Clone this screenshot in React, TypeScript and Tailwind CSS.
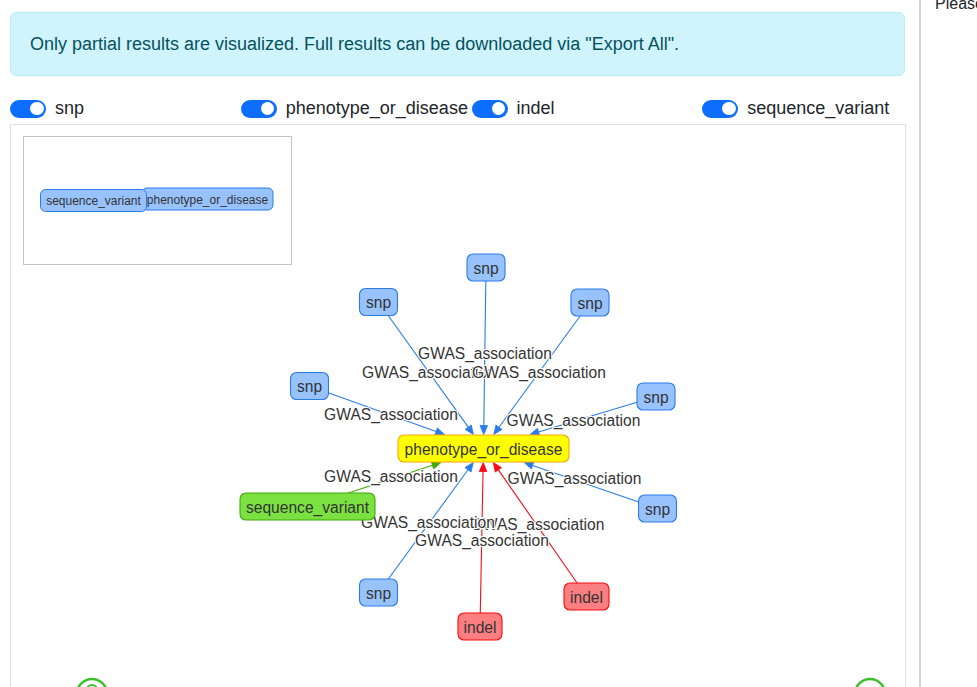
import React from 'react';

type GraphNode = {
  id: string;
  label: string;
  x: number;
  y: number;
  w: number;
  fill: string;
  stroke: string;
};

type GraphEdge = {
  from: string;
  color: string;
  lx: number;
  ly: number;
};

const BLUE = { fill: '#97c2fc', stroke: '#2b7ce9' };
const RED = { fill: '#fb7e81', stroke: '#fa0a10' };
const GREEN = { fill: '#7be141', stroke: '#41a906' };

const center: GraphNode = { id: 'c', label: 'phenotype_or_disease', x: 483.5, y: 448.5, w: 171, fill: '#ffff00', stroke: '#ffa500' };

const nodes: GraphNode[] = [
  { id: 's1', label: 'snp', x: 486, y: 267.5, w: 38, ...BLUE },
  { id: 's2', label: 'snp', x: 378.5, y: 302, w: 38, ...BLUE },
  { id: 's3', label: 'snp', x: 590, y: 302.5, w: 38, ...BLUE },
  { id: 's4', label: 'snp', x: 309.5, y: 386, w: 38, ...BLUE },
  { id: 's5', label: 'snp', x: 656, y: 396.5, w: 38, ...BLUE },
  { id: 'sv', label: 'sequence_variant', x: 307.5, y: 506.5, w: 135, ...GREEN },
  { id: 's6', label: 'snp', x: 657.5, y: 508.5, w: 38, ...BLUE },
  { id: 's7', label: 'snp', x: 378.5, y: 592.5, w: 38, ...BLUE },
  { id: 'i1', label: 'indel', x: 480, y: 626.5, w: 44, ...RED },
  { id: 'i2', label: 'indel', x: 586.5, y: 596.5, w: 45, ...RED },
];

// label draw order matters: later labels cover earlier ones
const edges: GraphEdge[] = [
  { from: 's1', color: '#2b7ce9', lx: 485, ly: 353 },
  { from: 's2', color: '#2b7ce9', lx: 429, ly: 372 },
  { from: 's3', color: '#2b7ce9', lx: 539, ly: 372 },
  { from: 's4', color: '#2b7ce9', lx: 391, ly: 414 },
  { from: 's5', color: '#2b7ce9', lx: 573.5, ly: 420 },
  { from: 'sv', color: '#41a906', lx: 391, ly: 476 },
  { from: 's6', color: '#2b7ce9', lx: 574.5, ly: 478 },
  { from: 'i2', color: '#fa0a10', lx: 537.5, ly: 524 },
  { from: 's7', color: '#2b7ce9', lx: 428, ly: 522 },
  { from: 'i1', color: '#fa0a10', lx: 482, ly: 540 },
];

const NODE_H = 27;

function tipPoint(sx: number, sy: number) {
  const dx = sx - center.x;
  const dy = sy - center.y;
  const hw = center.w / 2 + 0.5;
  const hh = NODE_H / 2 + 0.5;
  const s = Math.min(dx === 0 ? Infinity : hw / Math.abs(dx), dy === 0 ? Infinity : hh / Math.abs(dy));
  return { x: center.x + dx * s, y: center.y + dy * s };
}

function Edge({ edge }: { edge: GraphEdge }) {
  const src = nodes.find((n) => n.id === edge.from)!;
  const tip = tipPoint(src.x, src.y);
  const dx = tip.x - src.x;
  const dy = tip.y - src.y;
  const len = Math.hypot(dx, dy);
  const ux = dx / len;
  const uy = dy / len;
  const bx = tip.x - ux * 9;
  const by = tip.y - uy * 9;
  const px = -uy * 3.8;
  const py = ux * 3.8;
  return (
    <g>
      <line x1={src.x} y1={src.y} x2={bx} y2={by} stroke={edge.color} strokeWidth={1.1} />
      <polygon
        points={`${tip.x},${tip.y} ${bx + px},${by + py} ${bx - px},${by - py}`}
        fill={edge.color}
        stroke={edge.color}
        strokeWidth={0.8}
        strokeLinejoin="round"
      />
    </g>
  );
}

function Node({ node }: { node: GraphNode }) {
  return (
    <g>
      <rect
        x={node.x - node.w / 2}
        y={node.y - NODE_H / 2}
        width={node.w}
        height={NODE_H}
        rx={6}
        fill={node.fill}
        stroke={node.stroke}
        strokeWidth={1.1}
      />
      <text x={node.x} y={node.y + 0.5} textAnchor="middle" dominantBaseline="central" fontSize={15.6} fill="#343434">
        {node.label}
      </text>
    </g>
  );
}

function Toggle({ label }: { label: string }) {
  return (
    <div className="flex items-center gap-[9px] whitespace-nowrap">
      <span className="relative h-[18px] w-[36px] shrink-0 rounded-full bg-[#0d6efd]">
        <span className="absolute right-[2.5px] top-[2.25px] h-[13.5px] w-[13.5px] rounded-full bg-white" />
      </span>
      <span className="text-[18px] leading-[27px] text-[#212529]">{label}</span>
    </div>
  );
}

function Minimap() {
  return (
    <div className="absolute left-[12px] top-[11px] h-[129px] w-[269px] border border-[#c4c4c4] bg-white">
      <svg width="267" height="127" className="block">
        <rect x={118} y={51} width={131} height={22} rx={5} fill="#97c2fc" stroke="#2b7ce9" />
        <text x={183.5} y={62.5} textAnchor="middle" dominantBaseline="central" fontSize={12} fill="#343434">
          phenotype_or_disease
        </text>
        <rect x={16.5} y={52.5} width={106} height={22} rx={5} fill="#97c2fc" stroke="#2b7ce9" />
        <text x={69.5} y={64} textAnchor="middle" dominantBaseline="central" fontSize={12} fill="#343434">
          sequence_variant
        </text>
      </svg>
    </div>
  );
}

export default function App() {
  const types = ['snp', 'phenotype_or_disease', 'indel', 'sequence_variant'];

  return (
    <div className="flex h-[687px] w-[977px] overflow-hidden bg-white font-['Liberation_Sans',Arial,sans-serif] text-[#212529]">
      <div className="w-[919px] shrink-0 pl-[10px] pt-[12px]">
        <div className="flex h-[64px] w-[895px] items-center rounded-[6px] border border-[#b6effb] bg-[#cff4fc] px-[19px] pt-[1px] text-[18px] text-[#055160]">
          Only partial results are visualized. Full results can be downloaded via "Export All".
        </div>

        <div className="mt-[19px] grid w-[923px] grid-cols-4">
          {types.map((t) => (
            <Toggle key={t} label={t} />
          ))}
        </div>

        <div className="relative mt-[2px] h-[600px] w-[896px] border border-[#dee2e6] bg-white">
          <svg width="894" height="598" className="absolute left-0 top-0 block" fontFamily="'Liberation Sans', Arial, sans-serif">
            <g transform="translate(-11 -125)">
              {edges.map((e) => (
                <Edge key={e.from} edge={e} />
              ))}
              {edges.map((e) => (
                <text
                  key={'l' + e.from}
                  x={e.lx}
                  y={e.ly}
                  textAnchor="middle"
                  dominantBaseline="central"
                  fontSize={15.6}
                  fill="#343434"
                  stroke="#ffffff"
                  strokeWidth={2.2}
                  paintOrder="stroke"
                >
                  GWAS_association
                </text>
              ))}
              {nodes.map((n) => (
                <Node key={n.id} node={n} />
              ))}
              <Node node={center} />

              <circle cx={92} cy={694} r={15} fill="none" stroke="#3cbf2c" strokeWidth={2.5} />
              <circle cx={92} cy={690} r={5} fill="none" stroke="#3cbf2c" strokeWidth={2} />
              <circle cx={870} cy={694} r={15} fill="none" stroke="#3cbf2c" strokeWidth={2.5} />
            </g>
          </svg>
          <Minimap />
        </div>
      </div>

      <div className="w-[2px] shrink-0 bg-[#d4d4d4]" />

      <div className="min-w-0 flex-1 overflow-hidden pl-[14px]">
        <p className="-mt-[8px] whitespace-nowrap text-[16px] leading-[24px]">Please select a node to see its details.</p>
      </div>
    </div>
  );
}
